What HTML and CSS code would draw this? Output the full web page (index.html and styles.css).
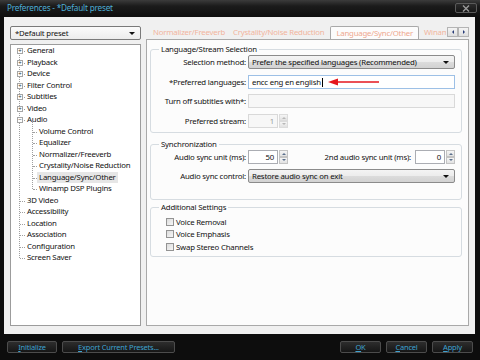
FILE: index.html
```html
<!DOCTYPE html>
<html lang="en">
<head>
    <meta charset="UTF-8">
    <title>Preferences - *Default preset</title>
    <link rel="stylesheet" href="styles.css">
</head>
<body>
    <div class="window">
        <div class="titlebar">
            <span class="title">Preferences - *Default preset</span>
            <div class="close-btn">
                <svg width="10" height="7" viewBox="0 0 10 7"><path d="M2 0.5 L8 6.5 M8 0.5 L2 6.5" stroke="#9a9a9a" stroke-width="1.4"/></svg>
            </div>
        </div>

        <div class="client">
            <div class="left-col">
                <div class="combo preset">*Default preset<span class="caret"></span></div>
                <div class="tree">
                    <div class="tree-list">
                        <div class="node"><span class="exp">+</span>General</div>
                        <div class="node"><span class="exp">+</span>Playback</div>
                        <div class="node"><span class="exp">+</span>Device</div>
                        <div class="node"><span class="exp">+</span>Filter Control</div>
                        <div class="node"><span class="exp">+</span>Subtitles</div>
                        <div class="node"><span class="exp">+</span>Video</div>
                        <div class="node"><span class="exp">&minus;</span>Audio</div>
                        <div class="tree-sub">
                            <div class="node sub">Volume Control</div>
                            <div class="node sub">Equalizer</div>
                            <div class="node sub">Normalizer/Freeverb</div>
                            <div class="node sub">Crystality/Noise Reduction</div>
                            <div class="node sub"><span class="selected">Language/Sync/Other</span></div>
                            <div class="node sub">Winamp DSP Plugins</div>
                        </div>
                        <div class="node">3D Video</div>
                        <div class="node">Accessibility</div>
                        <div class="node">Location</div>
                        <div class="node">Association</div>
                        <div class="node">Configuration</div>
                        <div class="node">Screen Saver</div>
                    </div>
                </div>
            </div>

            <div class="right-col">
                <div class="tabs">
                    <span class="tab">Normalizer/Freeverb</span>
                    <span class="tab">Crystality/Noise Reduction</span>
                    <span class="tab active">Language/Sync/Other</span>
                    <span class="tab next">Winam</span>
                    <div class="tab-scroll">
                        <span class="scroll-btn"><i class="tri-left"></i></span>
                        <span class="scroll-btn"><i class="tri-right"></i></span>
                    </div>
                </div>
                <div class="tab-panel">
                    <fieldset class="group g-lang">
                        <legend>Language/Stream Selection</legend>
                        <div class="row">
                            <label>Selection method:</label>
                            <div class="combo">Prefer the specified languages (Recommended)<span class="caret"></span></div>
                        </div>
                        <div class="row">
                            <label>*Preferred languages:</label>
                            <div class="input focus">encc eng en english<span class="text-cursor"></span></div>
                            <svg class="red-arrow" width="52" height="8" viewBox="0 0 52 8">
                                <path d="M8 4 H51" stroke="#e5161d" stroke-width="1.6"/>
                                <path d="M0 4 L10 0.5 L10 7.5 Z" fill="#e5161d"/>
                            </svg>
                        </div>
                        <div class="row">
                            <label>Turn off subtitles with*:</label>
                            <div class="input disabled"></div>
                        </div>
                        <div class="row">
                            <label>Preferred stream:</label>
                            <div class="spin disabled">
                                <div class="spin-val">1</div>
                                <div class="spin-btns"><span class="up"></span><span class="down"></span></div>
                            </div>
                        </div>
                    </fieldset>

                    <fieldset class="group g-sync">
                        <legend>Synchronization</legend>
                        <div class="row">
                            <label>Audio sync unit (ms):</label>
                            <div class="ctrl-line">
                                <div class="spin">
                                    <div class="spin-val">50</div>
                                    <div class="spin-btns"><span class="up"></span><span class="down"></span></div>
                                </div>
                                <span class="inline-label">2nd audio sync unit (ms):</span>
                                <div class="spin">
                                    <div class="spin-val">0</div>
                                    <div class="spin-btns"><span class="up"></span><span class="down"></span></div>
                                </div>
                            </div>
                        </div>
                        <div class="row">
                            <label>Audio sync control:</label>
                            <div class="combo">Restore audio sync on exit<span class="caret"></span></div>
                        </div>
                    </fieldset>

                    <fieldset class="group g-extra">
                        <legend>Additional Settings</legend>
                        <div class="check"><span class="box"></span>Voice Removal</div>
                        <div class="check"><span class="box"></span>Voice Emphasis</div>
                        <div class="check"><span class="box"></span>Swap Stereo Channels</div>
                    </fieldset>
                </div>
            </div>
        </div>

        <div class="footer">
            <button class="btn btn-init"><u>I</u>nitialize</button>
            <button class="btn btn-export"><u>E</u>xport Current Presets...</button>
            <span class="spacer"></span>
            <button class="btn btn-small"><u>O</u>K</button>
            <button class="btn btn-small"><u>C</u>ancel</button>
            <button class="btn btn-small"><u>A</u>pply</button>
        </div>
    </div>
</body>
</html>
```

FILE: styles.css
```css
* {
    margin: 0;
    padding: 0;
    box-sizing: border-box;
    font-family: "Noto Sans", "Open Sans", sans-serif;
}

body {
    width: 480px;
    height: 360px;
    background: #0a0a0a;
    overflow: hidden;
}

.window {
    width: 480px;
    height: 360px;
    background: linear-gradient(#3b3b3b 0, #1b1b1b 6px, #0d0d0d 18px, #0d0d0d 100%);
    display: flex;
    flex-direction: column;
}

/* title bar */
.titlebar {
    height: 17px;
    display: flex;
    align-items: flex-start;
    padding-left: 7px;
}

.title {
    font-size: 8.2px;
    letter-spacing: -0.2px;
    line-height: 16px;
    color: #4eaed6;
}

.close-btn {
    margin-left: auto;
    margin-right: 3px;
    margin-top: 3px;
    width: 22px;
    height: 10px;
    border: 1px solid #5a5a5a;
    border-radius: 2px;
    background: linear-gradient(#2c2c2c, #161616);
    display: flex;
    align-items: center;
    justify-content: center;
}

/* client area */
.client {
    height: 317px;
    margin: 0 5px 0 4px;
    background: #f0f0f0;
    display: flex;
    gap: 5px;
    padding: 8px 5px 8px 6px;
    font-size: 7.8px;
    letter-spacing: -0.2px;
    color: #111;
}

.left-col {
    width: 131px;
    flex-shrink: 0;
    display: flex;
    flex-direction: column;
    gap: 4px;
    padding-top: 1px;
}

.combo {
    position: relative;
    height: 14px;
    line-height: 12px;
    padding-left: 3px;
    border: 1px solid #8b8b8b;
    border-radius: 2px;
    background: linear-gradient(#f4f4f4 0, #ececec 50%, #dcdcdc 50%, #d2d2d2 100%);
    white-space: nowrap;
    overflow: hidden;
}

.combo.preset {
    background: linear-gradient(#fbfbfb, #ececec);
    border-color: #7a7a7a;
    padding-left: 4px;
}

.caret {
    position: absolute;
    right: 5px;
    top: 5px;
    width: 0;
    height: 0;
    border-left: 3px solid transparent;
    border-right: 3px solid transparent;
    border-top: 3px solid #111;
}

/* tree */
.tree {
    flex: 1;
    background: #fff;
    border: 1px solid #9c9c9c;
}

.tree-list {
    position: relative;
}

.tree-list::before {
    content: "";
    position: absolute;
    left: 8px;
    top: 6px;
    bottom: 6px;
    border-left: 1px dotted #a0a0a0;
}

.tree-sub {
    position: relative;
}

.tree-sub::before {
    content: "";
    position: absolute;
    left: 21px;
    top: -5px;
    bottom: 6px;
    border-left: 1px dotted #a0a0a0;
}

.node {
    position: relative;
    height: 11.5px;
    line-height: 11.5px;
    padding-left: 16px;
    white-space: nowrap;
}

.node::after {
    content: "";
    position: absolute;
    left: 9px;
    top: 6px;
    width: 5px;
    border-top: 1px dotted #a0a0a0;
}

.node.sub {
    padding-left: 28px;
}

.node.sub::after {
    left: 22px;
    width: 4px;
}

.exp {
    position: absolute;
    left: 6px;
    top: 3px;
    width: 6px;
    height: 6px;
    border: 1px solid #a6a6a6;
    background: #fff;
    font-size: 6px;
    letter-spacing: 0;
    line-height: 4px;
    text-align: center;
    color: #333;
    z-index: 1;
}

.selected {
    display: inline-block;
    background: #e6e6e6;
    padding: 0 2px;
    margin-left: -2px;
    line-height: 11px;
}

/* right side */
.right-col {
    flex: 1;
    min-width: 0;
    display: flex;
    flex-direction: column;
}

.tabs {
    position: relative;
    height: 14px;
    display: flex;
    align-items: flex-end;
    overflow: hidden;
    white-space: nowrap;
    padding-left: 3px;
}

.tab {
    color: #f2b49d;
    padding: 0 4px 1px 4px;
    line-height: 12px;
    flex-shrink: 0;
}

.tab.active {
    height: 14px;
    line-height: 13px;
    padding: 0 5px;
    margin-left: 2px;
    color: #efa88e;
    background: #fcfcfc;
    border: 1px solid #a9a9a9;
    border-bottom: none;
    border-radius: 2px 2px 0 0;
    position: relative;
    top: 1px;
}

.tab.next {
    margin-left: 1px;
}

.tab-scroll {
    position: absolute;
    right: 1px;
    top: 2px;
    display: flex;
    background: #f0f0f0;
    padding-left: 1px;
}

.scroll-btn {
    width: 11px;
    height: 10px;
    border: 1px solid #b4b4b4;
    background: linear-gradient(#f4f4f4, #dedede);
    display: flex;
    align-items: center;
    justify-content: center;
}

.tri-left {
    border-top: 2px solid transparent;
    border-bottom: 2px solid transparent;
    border-right: 2px solid #283c78;
}

.tri-right {
    border-top: 2px solid transparent;
    border-bottom: 2px solid transparent;
    border-left: 2px solid #283c78;
}

.tab-panel {
    flex: 1;
    background: #fcfcfc;
    border: 1px solid #a9a9a9;
    margin-right: 1px;
    padding: 4px 6px 0 3px;
}

.group {
    border: 1px solid #d6dce1;
    border-radius: 3px;
    padding: 0 6px 4px 0;
}

.group legend {
    margin-left: 8px;
    padding: 0 2px;
    line-height: 11px;
    color: #111;
}

.row {
    position: relative;
    display: grid;
    grid-template-columns: 95px 1fr;
    column-gap: 2px;
    align-items: center;
    height: 14px;
    margin-bottom: 5.5px;
}

.row:last-of-type {
    margin-bottom: 0;
}

.row label {
    text-align: right;
    white-space: nowrap;
}

.input {
    height: 14px;
    line-height: 12px;
    padding-left: 3px;
    border: 1px solid #abadb3;
    background: #fff;
}

.input.focus {
    border-color: #9dc0e6;
}

.input.disabled {
    border-color: #d9d9d9;
    background: #f7f7f7;
}

.text-cursor {
    display: inline-block;
    width: 1px;
    height: 9px;
    background: #000;
    vertical-align: -2px;
    margin-left: 1px;
}

.red-arrow {
    position: absolute;
    left: 177px;
    top: 3px;
}

.spin {
    width: 40px;
    height: 14px;
    display: flex;
}

.spin-val {
    flex: 1;
    border: 1px solid #abadb3;
    background: #fff;
    text-align: right;
    padding-right: 3px;
    line-height: 12px;
}

.spin-btns {
    width: 9px;
    display: flex;
    flex-direction: column;
    margin-left: 1px;
}

.spin-btns span {
    flex: 1;
    border: 1px solid #c3c3c3;
    background: linear-gradient(#f5f5f5, #e2e2e2);
    position: relative;
}

.spin-btns .up::after,
.spin-btns .down::after {
    content: "";
    position: absolute;
    left: 2px;
    top: 2px;
    border-left: 2px solid transparent;
    border-right: 2px solid transparent;
}

.spin-btns .up::after {
    border-bottom: 2px solid #5a6f8c;
}

.spin-btns .down::after {
    top: 1px;
    border-top: 2px solid #5a6f8c;
}

.spin.disabled .spin-val {
    color: #9a9a9a;
    border-color: #d9d9d9;
    background: #f7f7f7;
}

.spin.disabled .spin-btns span {
    border-color: #dcdcdc;
}

.spin.disabled .up::after {
    border-bottom-color: #b8b8b8;
}

.spin.disabled .down::after {
    border-top-color: #b8b8b8;
}

.ctrl-line {
    display: flex;
    align-items: center;
}

.inline-label {
    flex: 1;
    text-align: right;
    padding-right: 4px;
    white-space: nowrap;
}

.g-lang {
    padding-bottom: 4px;
}

.g-sync {
    margin-top: 6px;
    padding-bottom: 11px;
}

.g-sync .row {
    margin-bottom: 5px;
}

.g-extra {
    margin-top: 2px;
    padding: 3px 0 3px 0;
}

.check {
    height: 12.5px;
    line-height: 12.5px;
    display: flex;
    align-items: center;
    gap: 2px;
    margin-left: 15px;
}

.box {
    width: 8px;
    height: 8px;
    border: 1px solid #939393;
    background: linear-gradient(135deg, #dcdcdc, #f6f6f6);
}

/* footer buttons */
.footer {
    flex: 1;
    display: flex;
    align-items: flex-start;
    gap: 5px;
    padding: 7px 7px 0 7px;
}

.spacer {
    flex: 1;
}

.btn {
    height: 12px;
    border: 1px solid #4c4c4c;
    border-radius: 2px;
    background: linear-gradient(#2d2d2d, #161616);
    color: #3fa2d0;
    font-size: 7.5px;
    letter-spacing: -0.2px;
    line-height: 10px;
}

.btn-init {
    width: 50px;
}

.btn-export {
    width: 113px;
}

.btn-small {
    width: 41px;
}
```
